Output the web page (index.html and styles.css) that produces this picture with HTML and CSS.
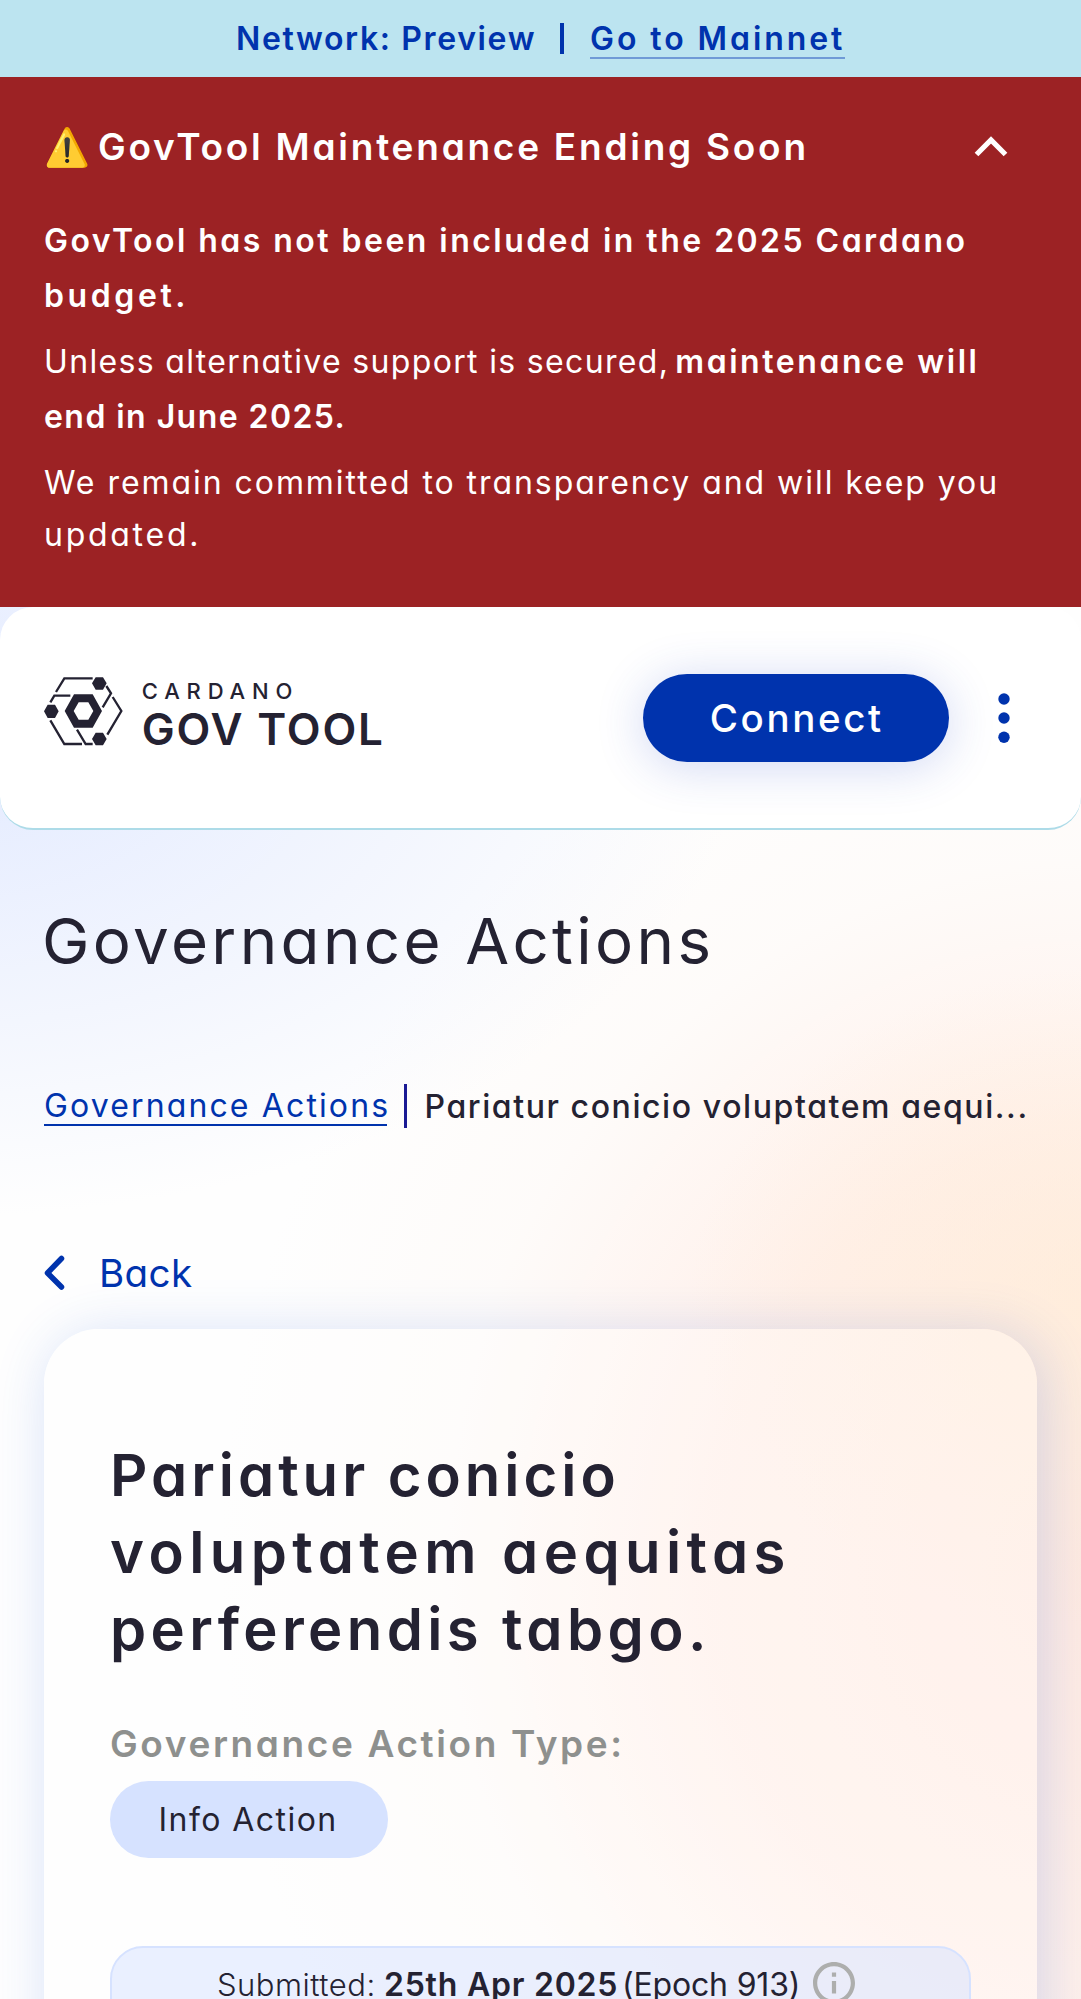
FILE: index.html
```html
<!DOCTYPE html>
<html lang="en">
<head>
<meta charset="utf-8">
<title>GovTool</title>
<link rel="stylesheet" href="styles.css">
</head>
<body>
<div class="page">
  <div class="network"><span class="network-name">Network: Preview</span><span class="bar"></span><a class="network-link">Go to Mainnet</a></div>
  <section class="notice">
    <div class="notice-head">
      <h2><span class="emoji">⚠️</span><span class="notice-title">GovTool Maintenance Ending Soon</span></h2>
      <svg class="chevron" width="34" height="22" viewBox="0 0 34 22"><path d="M2.5 18.5 17 4l14.500 14.500" fill="none" stroke="#fff" stroke-width="5.200"/></svg>
    </div>
    <p class="strong"><span class="line n1">GovTool has not been included in the 2025 Cardano</span><span class="line n2">budget.</span></p>
    <p><span class="line"><span class="n3">Unless alternative support is secured,</span><b class="n4">maintenance will</b></span><b class="line n5">end in June 2025.</b></p>
    <p class="last"><span class="line n6">We remain committed to transparency and will keep you</span><span class="line n7">updated.</span></p>
  </section>
  <main class="content">
    <header class="nav">
      <svg class="logo" width="338" height="69" viewBox="42 80 1014 207" fill="none" stroke="#242232" stroke-width="7">
        <path d="M188 84H103L78 125M121 136H73L61 156M229 107 243 129 218 171M248 140 274 182 232 253M61 210 103 281H156M141 238 167 281H188"/>
        <g fill="#242232" stroke="none">
          <path d="M42 183 53 163H75L86 183 75 203H53ZM186 99 197 81H219L230 99 219 118H197ZM186 266 197 247H219L230 266 219 285H197Z"/>
          <path fill-rule="evenodd" d="M104 182 132 132H188L216 182 188 232H132ZM131 182 146 208H175L190 182 175 156H146Z"/>
          <text class="logo-small" x="335" y="145" textLength="452">CARDANO</text>
          <text class="logo-big" x="335" y="283" textLength="724">GOV TOOL</text>
        </g>
      </svg>
      <button class="connect">Connect</button>
      <svg class="dots" width="12" height="50" viewBox="0 0 12 50" fill="#0033ad"><circle cx="6" cy="6" r="5.700"/><circle cx="6" cy="25" r="5.700"/><circle cx="6" cy="44.300" r="5.700"/></svg>
    </header>
    <h1>Governance Actions</h1>
    <div class="rule"></div>
    <nav class="crumbs"><a>Governance Actions</a><i></i><span>Pariatur conicio voluptatem aequi...</span></nav>
    <a class="back"><svg width="21" height="36" viewBox="0 0 21 36"><path d="M17.500 3.500 3.500 18 17.500 32" fill="none" stroke="#0033ad" stroke-width="5.500" stroke-linecap="round" stroke-linejoin="round"/></svg><span>Back</span></a>
    <article class="card">
      <h3><span class="line t1">Pariatur conicio</span><span class="line t2">voluptatem aequitas</span><span class="line t3">perferendis tabgo.</span></h3>
      <div class="label">Governance Action Type:</div>
      <div class="pill">Info Action</div>
      <div class="dates">
        <span class="d1">Submitted:</span><b>25th Apr 2025</b><span class="d3">(Epoch 913)</span>
        <svg width="42" height="42" viewBox="2 2 20 20" fill="#adaead"><path d="M11 7h2v2h-2zm0 4h2v6h-2zm1-9C6.480 2 2 6.480 2 12s4.480 10 10 10 10-4.480 10-10S17.520 2 12 2zm0 18c-4.410 0-8-3.590-8-8s3.590-8 8-8 8 3.590 8 8-3.590 8-8 8z"/></svg>
      </div>
    </article>
  </main>
</div>
</body>
</html>
```
FILE: styles.css
```css
* { box-sizing: border-box; }
body {
  margin: 0;
  font-family: Inter, "Liberation Sans", sans-serif;
  font-feature-settings: "cv11";
  font-size: 32px;
  color: #242232;
}
h1, h2, h3, p { margin: 0; }
b { font-weight: 600; }
.page { width: 1081px; height: 1999px; overflow: hidden; display: flex; flex-direction: column; background: #9c2224; }
.line { display: block; white-space: pre; }

.network {
  height: 77px; flex: none; display: flex; align-items: center;
  padding-left: 236px; background: #bce4f0; color: #0033ad; font-weight: 600; white-space: pre;
}
.network-name { letter-spacing: 1.63px; width: 324px; }
.bar { width: 4px; height: 31px; background: #0033ad; margin-right: 26px; }
.network-link { letter-spacing: 2.92px; line-height: 36px; border-bottom: 2.500px solid #6f9ad6; margin-top: 2px; }

.notice { height: 530px; flex: none; padding: 42.500px 44px 0; color: #fff; }
.notice-head { display: flex; justify-content: space-between; align-items: center; height: 54px; margin-bottom: 40.500px; padding-right: 29px; }
.notice h2 { display: flex; font-size: 37px; font-weight: 600; line-height: 54px; white-space: pre; }
.emoji { width: 54px; }
.notice-title { letter-spacing: 2.75px; }
.notice p { line-height: 54.500px; margin-bottom: 12px; }
.notice .strong { font-weight: 600; }
.notice .last { line-height: 52px; padding-top: 1px; }
.n1 { letter-spacing: 2.46px; }
.n2 { letter-spacing: 3.600px; }
.n3 { letter-spacing: 1.340px; margin-right: 6px; }
.n4 { letter-spacing: 2.550px; }
.n5 { letter-spacing: 1.440px; }
.n6 { letter-spacing: 1.950px; }
.n7 { letter-spacing: 2.730px; }

.content {
  flex: 1; min-height: 0; overflow: hidden; display: flex; flex-direction: column;
  background:
    radial-gradient(ellipse 800px 480px at -60px 130px, rgba(225, 233, 255, .95), rgba(225, 233, 255, 0) 100%),
    radial-gradient(ellipse 420px 330px at 1110px 690px, rgba(255, 236, 214, .7), rgba(255, 236, 214, 0) 100%),
    radial-gradient(ellipse 880px 950px at 1100px 960px, rgba(255, 233, 224, .95) 0%, rgba(255, 238, 231, .85) 45%, rgba(255, 246, 241, .35) 75%, rgba(255, 255, 255, 0) 100%),
    #fefefe;
}
.nav {
  height: 223px; flex: none; display: flex; align-items: center;
  padding: 0 71.500px 0 44px; background: #fff;
  border-radius: 33px; border-bottom: 2.500px solid #addbe8;
}
.logo { margin: 0 auto 13px 0; }
.logo-small { font-size: 66px; font-weight: 500; }
.logo-big { font-size: 132px; font-weight: 600; }
.connect {
  width: 305.500px; height: 88px; border: 0; border-radius: 44px; padding: 0 0 0 2px; margin-right: 49px;
  background: #0033ad; color: #fff; font: 500 38.500px Inter, sans-serif; letter-spacing: 2.590px;
  box-shadow: 0 5px 48px rgba(47, 78, 200, .22);
}
.dots { flex: none; }
h1 { margin: 70px 0 0 42px; font-size: 63.600px; font-weight: 400; line-height: 82px; letter-spacing: 3.360px; white-space: pre; }
.rule { height: 2.500px; margin: 69px 44px 0; background: #fff; }
.crumbs { height: 44px; margin: 33px 44px 0; display: flex; align-items: center; white-space: pre; }
.crumbs a { color: #0033ad; letter-spacing: 2.130px; width: 343px; line-height: 36px; border-bottom: 2.500px solid #0033ad; margin-top: 2px; }
.crumbs i { width: 2.500px; height: 44px; background: #1a1a94; margin: 0 18px 0 17px; }
.crumbs span { font-weight: 500; letter-spacing: 1.590px; }
.back { height: 54px; margin: 122px 44px 0; display: flex; align-items: center; color: #0033ad; font-size: 38.500px; }
.back span { margin-left: 34px; letter-spacing: .400px; }
.card {
  flex: none; height: 760px; margin: 33px 44px 0; padding: 108px 66px 0;
  border-radius: 55px; background: rgba(255, 255, 255, .3);
  position: relative;
}
.card::before {
  content: ""; position: absolute; inset: 0; border-radius: 55px; pointer-events: none;
  box-shadow: 5.500px 5.500px 55px rgba(47, 98, 220, .2);
  clip-path: path(evenodd, "M-100 -100H1100V900H-100ZM55 0H938A55 55 0 0 1 993 55V760H0V55A55 55 0 0 1 55 0Z");
}
.card h3 { font-size: 58px; font-weight: 600; line-height: 77px; }
.t1 { letter-spacing: 4px; }
.t2 { letter-spacing: 5.430px; }
.t3 { letter-spacing: 4.390px; }
.label { margin-top: 47px; font-size: 37px; font-weight: 600; line-height: 58px; letter-spacing: 2.620px; color: #8e908e; }
.pill { width: 278px; height: 77px; margin-top: 8px; padding-left: 48.500px; border-radius: 39px; background: #d6e2ff; line-height: 77px; letter-spacing: 1.450px; }
.dates {
  margin-top: 88px; height: 180px; width: 861px; padding: 15px 0 0 105px; display: flex; align-items: center; align-content: flex-start;
  flex-wrap: wrap; white-space: pre; border: 2.500px solid #d6e2ff; border-radius: 33px; background: rgba(214, 226, 255, .5);
}
.dates .d1 { width: 167px; font-size: 31px; font-weight: 300; letter-spacing: .500px; }
.dates b { width: 238px; letter-spacing: .770px; }
.dates .d3 { width: 191px; letter-spacing: -.180px; }
.dates svg { transform: translateY(-1px); }
```
